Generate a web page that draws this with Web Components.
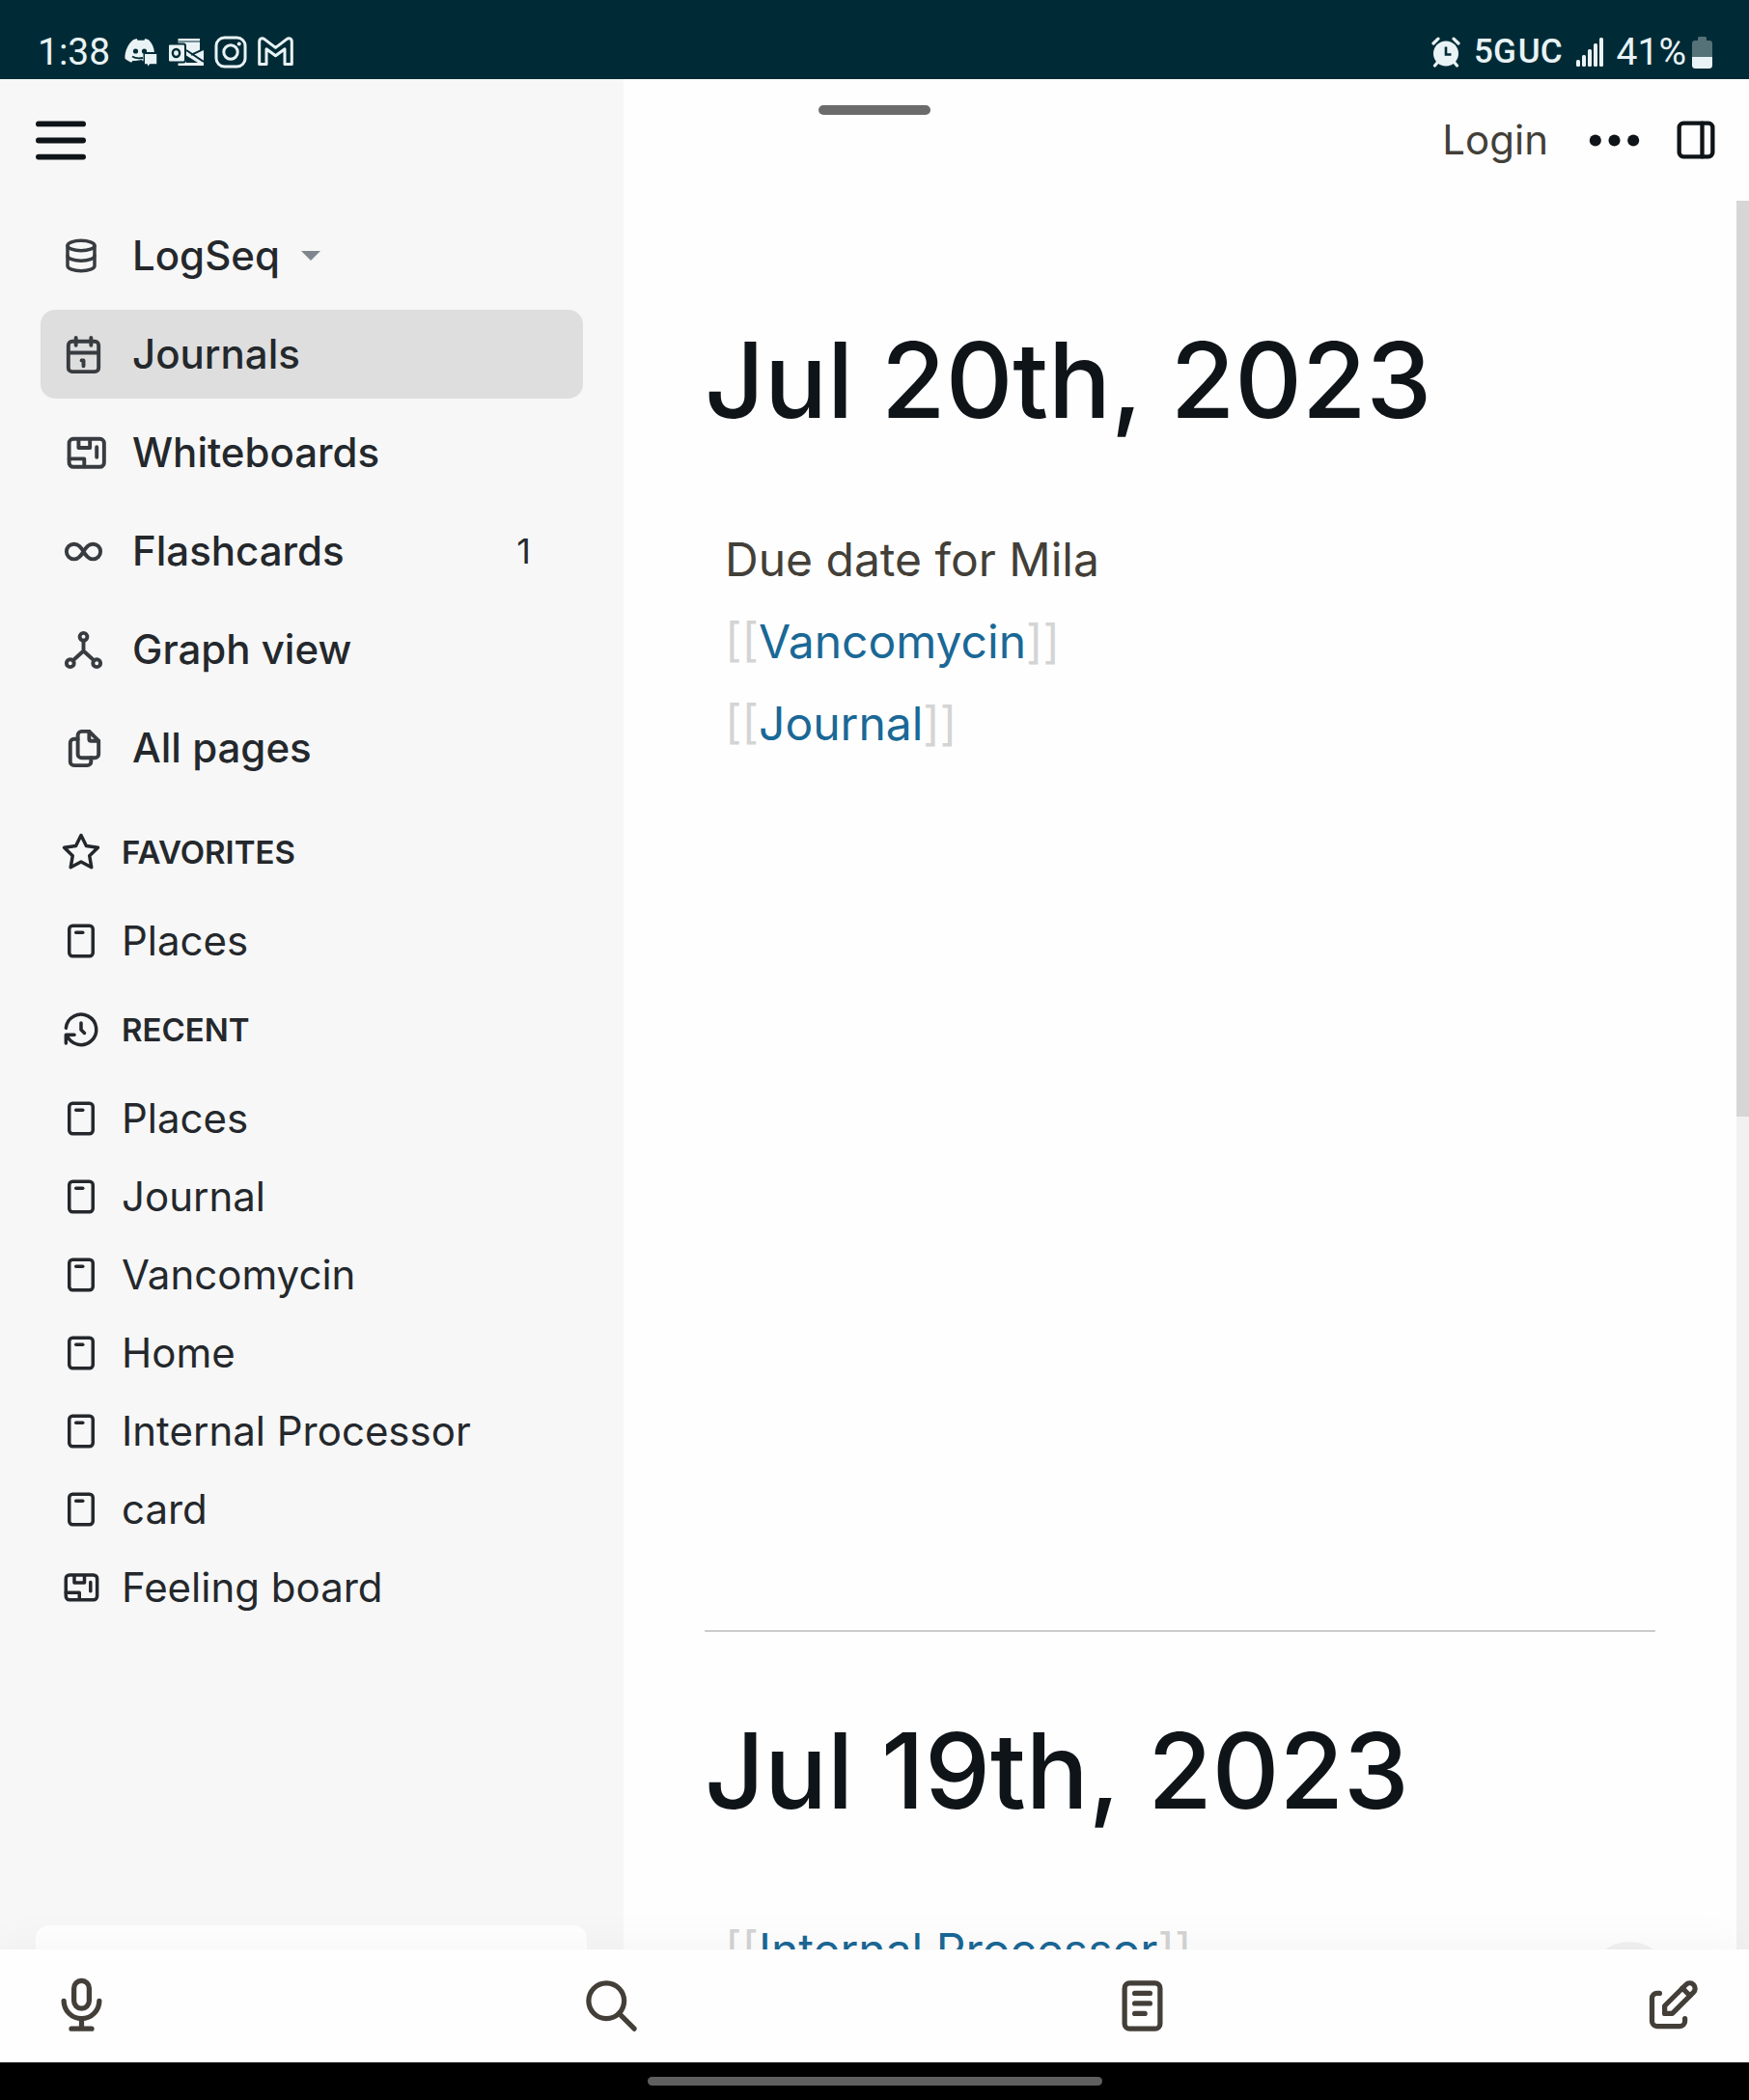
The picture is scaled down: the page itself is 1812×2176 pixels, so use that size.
<!DOCTYPE html>
<html lang="en">
<head>
<meta charset="utf-8">
<meta name="viewport" content="width=device-width, initial-scale=1">
<title>Logseq</title>
<style>
  :root{
    --status-bg:#002b36;
    --surface:#fefefe;
    --side-bg:#f7f7f7;
    --active-bg:#dedede;
    --title:#0f1419;
    --text:#433f38;
    --side-text:#24282c;
    --side-icon:#383c40;
    --link:#1a6896;
    --bracket:#d4d4d4;
    --rule:#cacdcc;
  }
  html, body{ margin:0; height:100%; }
  body{
    font-family:Inter, "Liberation Sans", sans-serif;
    color:var(--text); background:var(--surface); overflow:hidden;
  }
</style>
</head>
<body>
<ls-app>
  <ls-status-bar slot="status" time="1:38" network="5G UC" battery="41%"></ls-status-bar>

  <ls-sidebar slot="sidebar">
    <ls-graph-select slot="nav" name="LogSeq"></ls-graph-select>
    <ls-nav-item slot="nav" icon="calendar" active>Journals</ls-nav-item>
    <ls-nav-item slot="nav" icon="whiteboard-nav">Whiteboards</ls-nav-item>
    <ls-nav-item slot="nav" icon="infinity" count="1">Flashcards</ls-nav-item>
    <ls-nav-item slot="nav" icon="graph">Graph view</ls-nav-item>
    <ls-nav-item slot="nav" icon="files">All pages</ls-nav-item>

    <ls-page-group icon="star" label="FAVORITES">
      <ls-page-item>Places</ls-page-item>
    </ls-page-group>
    <ls-page-group icon="history" label="RECENT">
      <ls-page-item>Places</ls-page-item>
      <ls-page-item>Journal</ls-page-item>
      <ls-page-item>Vancomycin</ls-page-item>
      <ls-page-item>Home</ls-page-item>
      <ls-page-item>Internal Processor</ls-page-item>
      <ls-page-item>card</ls-page-item>
      <ls-page-item icon="whiteboard">Feeling board</ls-page-item>
    </ls-page-group>
  </ls-sidebar>

  <ls-toolbar slot="toolbar"></ls-toolbar>

  <ls-journal heading="Jul 20th, 2023">
    <ls-block>Due date for Mila</ls-block>
    <ls-block><ls-page-ref page="Vancomycin"></ls-page-ref></ls-block>
    <ls-block><ls-page-ref page="Journal"></ls-page-ref></ls-block>
  </ls-journal>
  <ls-journal heading="Jul 19th, 2023">
    <ls-block><ls-page-ref page="Internal Processor"></ls-page-ref></ls-block>
  </ls-journal>

  <ls-mobile-bar slot="footer"></ls-mobile-bar>
</ls-app>

<script>
(function () {
  // 24x24 outline icons, stroke inherits currentColor
  const BOARD = `<rect x="3" y="4.5" width="18.5" height="14.8" rx="2.2"/>
      <path d="M8 5v4.2h6V5M3 15h8v4M17.6 8.8v5.4"/>`;
  const ICONS = {
    menu: `<path d="M3.4 5.5h17.6M3.4 12h17.6M3.4 18.5h17.6" stroke-width="2.2"/>`,
    dots: `<g fill="currentColor" stroke="none"><circle cx="4.5" cy="12" r="2.3"/><circle cx="12" cy="12" r="2.3"/><circle cx="19.5" cy="12" r="2.3"/></g>`,
    'sidebar-right': `<rect x="4" y="4" width="16" height="16" rx="2"/><path d="M15 4v16"/>`,
    database: `<ellipse cx="12" cy="6" rx="8" ry="3"/><path d="M4 6v6a8 3 0 0 0 16 0V6"/><path d="M4 12v6a8 3 0 0 0 16 0v-6"/>`,
    calendar: `<rect x="4" y="5" width="16" height="16" rx="2"/><path d="M16 3v4M8 3v4M4 11h16M11 15h1v3"/>`,
    whiteboard: BOARD,
    'whiteboard-nav': `<g transform="translate(1.4 0)">${BOARD}</g>`,
    infinity: `<path d="M9.828 9.172a4 4 0 1 0 0 5.656 10 10 0 0 0 2.172-2.828 10 10 0 0 1 2.172-2.828 4 4 0 1 1 0 5.656 10 10 0 0 1-2.172-2.828 10 10 0 0 0-2.172-2.828"/>`,
    graph: `<circle cx="12" cy="5" r="2"/><circle cx="5" cy="19" r="2"/><circle cx="19" cy="19" r="2"/><path d="M6.5 17.5 12 12.5l5.5 5M12 7v5.5"/>`,
    files: `<path d="M15 3v4a1 1 0 0 0 1 1h4"/><path d="M18 17h-7a2 2 0 0 1-2-2V5a2 2 0 0 1 2-2h4l5 5v7a2 2 0 0 1-2 2z"/><path d="M16 17v2a2 2 0 0 1-2 2H7a2 2 0 0 1-2-2V9a2 2 0 0 1 2-2h2"/>`,
    star: `<path d="M12 17.75l-6.172 3.245 1.179-6.873-5-4.867 6.9-1 3.086-6.253 3.086 6.253 6.9 1-5 4.867 1.179 6.873z"/>`,
    history: `<path d="M12 8v4l2 2"/><path d="M3.05 11a9 9 0 1 1 .5 4m-.5 5v-5h5"/>`,
    page: `<rect x="5" y="3" width="14" height="18" rx="2"/><path d="M9 7h4"/>`,
    mic: `<rect x="9" y="2" width="6" height="11" rx="3"/><path d="M5 10a7 7 0 0 0 14 0M8 21h8M12 17v4"/>`,
    search: `<circle cx="10" cy="10" r="7"/><path d="M21 21l-6-6"/>`,
    note: `<rect x="5" y="3" width="14" height="18" rx="2"/><path d="M9 7h6M9 11h6M9 15h4"/>`,
    edit: `<path d="M7 7H6a2 2 0 0 0-2 2v9a2 2 0 0 0 2 2h9a2 2 0 0 0 2-2v-1"/><path d="M20.385 6.585a2.1 2.1 0 0 0-2.97-2.97L9 12v3h3l8.385-8.415z"/><path d="M16 5l3 3"/>`
  };

  const icon = (name) => `<svg class="icon" viewBox="0 0 24 24" fill="none" stroke="currentColor" stroke-width="2"
    stroke-linecap="round" stroke-linejoin="round" aria-hidden="true">${ICONS[name] || ''}</svg>`;

  const RESET = `
    :host, *{ box-sizing:border-box; }
    .icon{ display:block; flex:none; width:var(--icon-size, 42px); height:var(--icon-size, 42px); overflow:visible; }
    a{ color:inherit; text-decoration:none; }
    button{ margin:0; padding:0; border:0; background:none; color:inherit; font:inherit; cursor:pointer; }
  `;

  class LSElement extends HTMLElement{
    constructor(){
      super();
      this.attachShadow({mode:'open'});
    }
    connectedCallback(){
      this.shadowRoot.innerHTML = `<style>${RESET}${this.css()}</style>${this.html()}`;
    }
    attr(name, fallback){ return this.getAttribute(name) || fallback || ''; }
    css(){ return ''; }
    html(){ return '<slot></slot>'; }
  }

  /* ---------- shell ---------- */
  class LSApp extends LSElement{
    css(){ return `
      :host{ display:grid; grid-template-rows:auto minmax(0, 1fr) auto; height:100vh; }
      .body{ display:grid; grid-template-columns:minmax(0, 646px) minmax(0, 1fr); min-height:0; position:relative; }
      main{ display:flex; flex-direction:column; min-width:0; min-height:0; }
      .scroller{ display:flex; flex:1; min-height:0; position:relative; }
      .pages{ flex:1; min-width:0; overflow:hidden; padding:42px 84px 0; }
      .track{ flex:none; width:13px; background:#f1f1f1; }
      .thumb{ height:949px; background:#d6d6d6; }
      .help{
        position:absolute; right:81px; bottom:-78px; width:86px; height:86px;
        border-radius:50%; background:#f2f2f2;
      }
      .clip{ position:absolute; inset:0; overflow:hidden; pointer-events:none; }
      .grip{
        position:absolute; top:27px; left:50%; width:116px; height:10px; margin-left:-58px;
        border-radius:5px; background:#6b6b6b;
      }
    `; }
    html(){ return `
      <slot name="status"></slot>
      <div class="body">
        <slot name="sidebar"></slot>
        <main>
          <slot name="toolbar"></slot>
          <div class="scroller">
            <div class="pages"><slot></slot></div>
            <div class="track"><div class="thumb"></div></div>
            <div class="clip"><div class="help"></div></div>
          </div>
        </main>
        <div class="grip"></div>
      </div>
      <slot name="footer"></slot>
    `; }
  }

  class LSStatusBar extends LSElement{
    css(){ return `
      :host{
        display:flex; align-items:center; height:82px; padding:26px 38px 0 39px;
        background:var(--status-bg); color:#e9f3f5;
        font-family:Roboto, sans-serif; font-size:39px; line-height:56px;
      }
      svg{ display:block; flex:none; fill:currentColor; }
      .apps{ display:flex; align-items:center; gap:11px; margin-left:15px; }
      .right{ display:flex; align-items:center; gap:14px; margin-left:auto; }
      .net{ font-size:35px; font-weight:500; display:flex; gap:2px; }
      .power{ display:flex; align-items:center; gap:6px; }
    `; }
    html(){
      const net = this.attr('network').split(' ').map((s) => `<span>${s}</span>`).join('');
      return `
      <span>${this.attr('time')}</span>
      <div class="apps">
        <svg width="34" height="34" viewBox="0 0 34 34" aria-label="Discord">
          <path d="M9 4.2 12.6 3l1 1.8h6.8L21.4 3 25 4.2c3.4 3.4 5.6 8 5.9 12.8H19.5v9.2l-6.3-.1-4.6-.2-1.6 1.9C4.4 26.6 2 25.3.4 23.6.3 16 3.6 8.600 9 4.200Z"/>
          <circle cx="11.5" cy="16" r="2.6" fill="#002b36"/>
          <circle cx="20.5" cy="16" r="2.6" fill="#002b36"/>
          <path d="M8 21.5c3 2 6.5 2.4 11 1.5" fill="none" stroke="#002b36" stroke-width="1.8"/>
          <path d="M11 26l7.500-1V33h-9z" fill="#002b36"/>
          <path d="M20.500 18.500h13.300v11.300h-7.600L23.600 33v-3.200h-3.100z" stroke="#002b36" stroke-width="1"/>
        </svg>
        <svg width="37" height="34" viewBox="0 0 37 34" aria-label="Outlook">
          <path d="M10.500 3h22.500v13L37 14.500V31H10.500z"/>
          <path d="M10.500 6H33" fill="none" stroke="#002b36" stroke-width="1"/>
          <path d="M33 5v10.500l4-2V5z" fill="#002b36"/>
          <path d="M19 15l18 12M24 19.800 37 14" fill="none" stroke="#002b36" stroke-width="2"/>
          <path d="M19 20.500v7.500h12z" fill="#002b36"/>
          <rect x="0" y="8.500" width="18" height="19" rx="2" stroke="#002b36" stroke-width="2"/>
          <ellipse cx="8.500" cy="18" rx="3.600" ry="4" fill="none" stroke="#002b36" stroke-width="2.400"/>
        </svg>
        <svg width="34" height="34" viewBox="0 0 34 34" style="fill:none;stroke:currentColor;stroke-width:3" aria-label="Instagram">
          <rect x="2" y="2" width="30" height="30" rx="8.500"/>
          <circle cx="17" cy="17" r="7.200"/>
          <circle cx="25.700" cy="8.500" r="2" style="fill:currentColor;stroke:none"/>
        </svg>
        <svg width="37" height="34" viewBox="0 0 37 34" style="fill:none;stroke:currentColor;stroke-width:3;stroke-linejoin:round" aria-label="Gmail">
          <path d="M1.700 29.500V6.300C1.700 2.600 5 2 7 3.600L18.500 12.400 30 3.600C32 2 35.300 2.600 35.300 6.300V29.500H28V13.800L18.500 20.800 9 13.800V29.500Z"/>
        </svg>
      </div>
      <div class="right">
        <svg width="30" height="32" viewBox="0 0 30 32" aria-label="Alarm">
          <circle cx="15" cy="17.500" r="13"/>
          <path d="M2 7 7 2.200M28 7 23 2.200M6 27l-2.500 3M24 27l2.500 3" stroke="currentColor" stroke-width="3.200" stroke-linecap="round"/>
          <path d="M15 10.500v8h5.500" fill="none" stroke="#002b36" stroke-width="2.600"/>
        </svg>
        <div class="net">${net}</div>
        <svg width="28" height="30" viewBox="0 0 28 30" aria-label="Signal">
          <rect x="0" y="23" width="4" height="7" rx="1.500"/><rect x="6" y="18" width="4" height="12" rx="1.500"/>
          <rect x="12" y="12" width="4" height="18" rx="1.500"/><rect x="18" y="6" width="4" height="24" rx="1.500"/>
          <rect x="24" y="0" width="4" height="30" rx="1.500"/>
        </svg>
        <div class="power">
          <span>${this.attr('battery')}</span>
          <svg width="21" height="33" viewBox="0 0 21 33" aria-label="Battery">
            <path d="M6 1.500Q6 0 7.500 0h6Q15 0 15 1.500V4h3q3 0 3 3v14H0V7q0-3 3-3h3z" fill="#557279"/>
            <path d="M0 21h21v8.500q0 3.500-3.500 3.500h-14Q0 33 0 29.500z"/>
          </svg>
        </div>
      </div>`;
    }
  }

  /* ---------- left sidebar ---------- */
  class LSSidebar extends LSElement{
    css(){ return `
      :host{ display:flex; flex-direction:column; min-height:0; overflow:hidden; background:var(--side-bg); color:var(--side-text); }
      header{ flex:none; display:flex; align-items:center; height:126px; padding:0 31px; color:var(--title); --icon-size:63px; }
      nav{ flex:none; display:flex; flex-direction:column; gap:10px; padding:11px 42px 10px; }
      .groups{ flex:1; min-height:0; overflow:hidden; padding:0 42px; }
      .create{ flex:none; height:25px; margin:0 38px 0 37px; border-radius:14px 14px 0 0; background:#fff; }
    `; }
    html(){ return `
      <header><button aria-label="Toggle menu">${icon('menu')}</button></header>
      <nav><slot name="nav"></slot></nav>
      <div class="groups"><slot></slot></div>
      <div class="create"></div>
    `; }
  }

  class LSGraphSelect extends LSElement{
    css(){ return `
      :host{ display:block; }
      button{
        display:flex; align-items:center; width:100%; height:92px; padding:0 21px;
        font-size:42px; line-height:60px; font-weight:500;
      }
      .icon{ color:var(--side-icon); }
      .name{ margin-left:32px; }
      .caret{ width:20px; height:10px; margin-left:22px; fill:#7f868d; }
    `; }
    html(){ return `
      <button>${icon('database')}<span class="name">${this.attr('name')}</span>
        <svg class="caret" viewBox="0 0 20 10" aria-hidden="true"><path d="M0 0h20L10 10z"/></svg></button>
    `; }
  }

  class LSNavItem extends LSElement{
    css(){ return `
      :host{ display:block; --icon-size:47px; }
      a{
        display:flex; align-items:center; height:92px; padding:0 54px 0 21px; border-radius:15px;
        font-size:42px; line-height:60px; font-weight:500;
      }
      :host([active]) a{ background:var(--active-bg); }
      .icon{ color:var(--side-icon); }
      .label{ margin-left:27px; }
      .count{ margin-left:auto; font-size:36px; font-weight:400; }
    `; }
    html(){
      const count = this.attr('count');
      return `<a href="#">${icon(this.attr('icon'))}<span class="label"><slot></slot></span>${count ? `<span class="count">${count}</span>` : ''}</a>`;
    }
  }

  class LSPageGroup extends LSElement{
    css(){ return `
      :host{ display:block; }
      h2{
        display:flex; align-items:center; gap:21px; height:103px; margin:0; padding:0 21px;
        font-size:33px; line-height:50px; font-weight:600;
      }
    `; }
    html(){ return `<h2>${icon(this.attr('icon'))}<span>${this.attr('label')}</span></h2><slot></slot>`; }
  }

  class LSPageItem extends LSElement{
    css(){ return `
      :host{ display:block; }
      a{
        display:flex; align-items:center; gap:21px; height:81px; padding:0 21px;
        font-size:42px; line-height:60px;
      }
    `; }
    html(){ return `<a href="#">${icon(this.attr('icon', 'page'))}<span><slot></slot></span></a>`; }
  }

  /* ---------- main column ---------- */
  class LSToolbar extends LSElement{
    css(){ return `
      :host{ display:flex; align-items:center; justify-content:flex-end; gap:27px; height:126px; padding-right:29px; color:var(--title); }
      .login{ margin-right:10px; color:var(--text); font-size:42px; line-height:60px; }
      .more{ --icon-size:63px; }
      .right{ --icon-size:52px; }
    `; }
    html(){ return `
      <button class="login">Login</button>
      <button class="more" aria-label="More">${icon('dots')}</button>
      <button class="right" aria-label="Toggle right sidebar">${icon('sidebar-right')}</button>
    `; }
  }

  class LSJournal extends LSElement{
    css(){ return `
      :host{ display:block; min-height:1441px; padding-top:79px; border-bottom:2px solid var(--rule); }
      h1{ margin:0 0 78px; color:var(--title); font-size:108px; line-height:130px; font-weight:500; font-kerning:none; }
      .blocks{ padding-left:21px; }
    `; }
    html(){ return `<h1><a href="#">${this.attr('heading')}</a></h1><div class="blocks"><slot></slot></div>`; }
  }

  class LSBlock extends LSElement{
    css(){ return `:host{ display:block; font-size:48px; line-height:85px; }`; }
  }

  class LSPageRef extends LSElement{
    css(){ return `
      :host{ display:inline; }
      a{ color:var(--link); }
      .bracket{ color:var(--bracket); }
    `; }
    html(){ return `<span class="bracket">[[</span><a href="#">${this.attr('page')}</a><span class="bracket">]]</span>`; }
  }

  /* ---------- bottom ---------- */
  class LSMobileBar extends LSElement{
    css(){ return `
      :host{ display:block; position:relative; }
      .bar{
        display:flex; align-items:center; justify-content:space-between;
        height:117px; padding:0 48px 0 53px; background:var(--surface); color:var(--text);
        box-shadow:0 0 50px rgba(0,0,0,.05); --icon-size:63px;
      }
      .gesture{ display:flex; justify-content:center; align-items:center; height:39px; background:#000; position:relative; }
      .pill{ width:471px; height:9px; border-radius:5px; background:#5f5f5f; }
    `; }
    html(){ return `
      <div class="bar">
        <button aria-label="Record">${icon('mic')}</button>
        <button aria-label="Search">${icon('search')}</button>
        <button aria-label="Journals">${icon('note')}</button>
        <button aria-label="New note">${icon('edit')}</button>
      </div>
      <div class="gesture"><div class="pill"></div></div>
    `; }
  }

  const DEFS = {
    'ls-app': LSApp,
    'ls-status-bar': LSStatusBar,
    'ls-sidebar': LSSidebar,
    'ls-graph-select': LSGraphSelect,
    'ls-nav-item': LSNavItem,
    'ls-page-group': LSPageGroup,
    'ls-page-item': LSPageItem,
    'ls-toolbar': LSToolbar,
    'ls-journal': LSJournal,
    'ls-block': LSBlock,
    'ls-page-ref': LSPageRef,
    'ls-mobile-bar': LSMobileBar
  };
  for (const [name, cls] of Object.entries(DEFS)) {
    if (!customElements.get(name)) customElements.define(name, cls);
  }
})();
</script>
</body>
</html>
